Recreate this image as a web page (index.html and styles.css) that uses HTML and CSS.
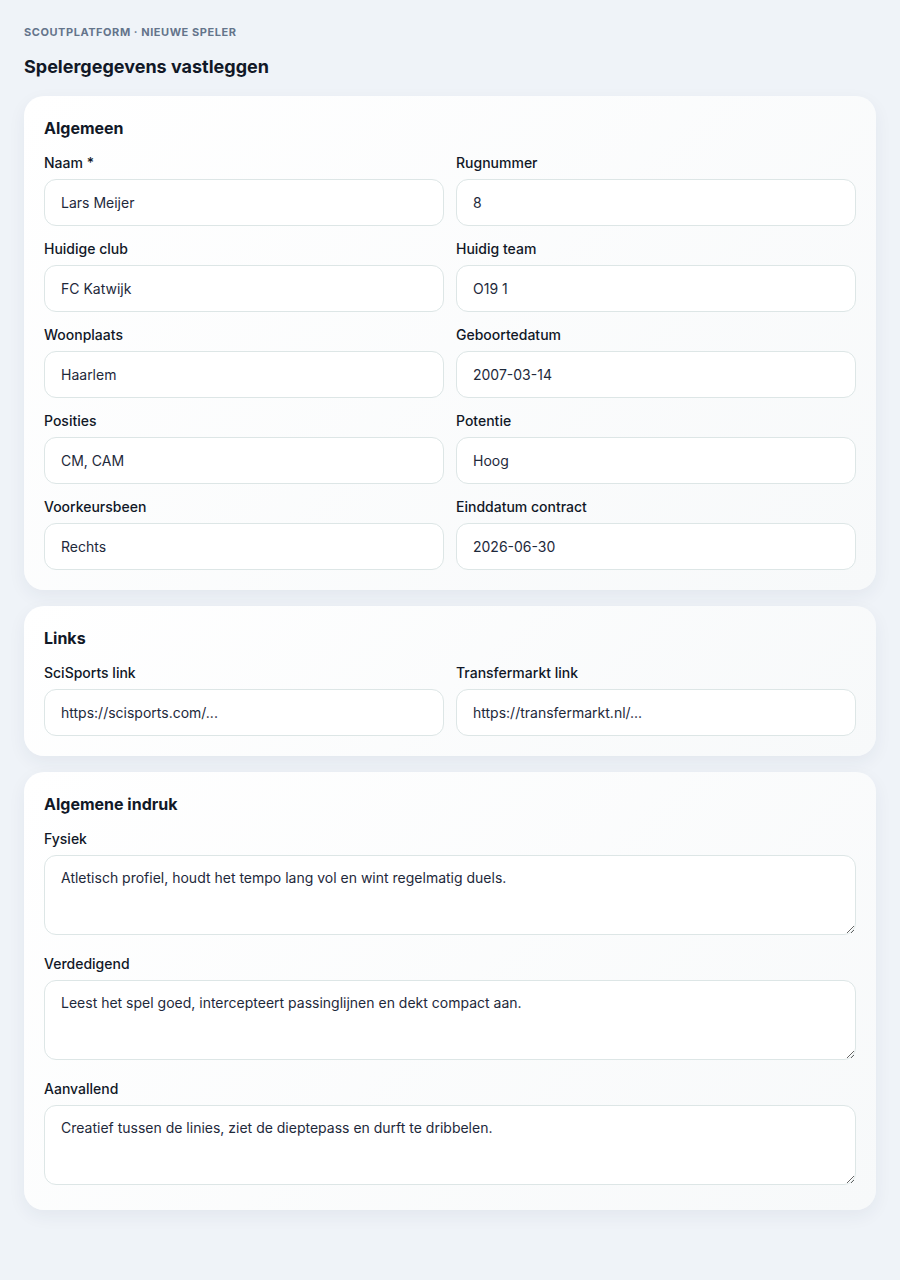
FILE: index.html
```html
<!DOCTYPE html>
<html lang="nl">
<head>
<meta charset="utf-8">
<title>Spelergegevens vastleggen</title>
<link rel="stylesheet" href="styles.css">
</head>
<body>
<div class="page">
  <p class="eyebrow">Scoutplatform · Nieuwe speler</p>
  <h1 class="title">Spelergegevens vastleggen</h1>

  <section class="card">
    <h2 class="card-title">Algemeen</h2>
    <div class="grid">
      <label class="field"><span class="label">Naam *</span><input class="input" value="Lars Meijer"></label>
      <label class="field"><span class="label">Rugnummer</span><input class="input" value="8"></label>
      <label class="field"><span class="label">Huidige club</span><input class="input" value="FC Katwijk"></label>
      <label class="field"><span class="label">Huidig team</span><input class="input" value="O19 1"></label>
      <label class="field"><span class="label">Woonplaats</span><input class="input" value="Haarlem"></label>
      <label class="field"><span class="label">Geboortedatum</span><input class="input" value="2007-03-14"></label>
      <label class="field"><span class="label">Posities</span><input class="input" value="CM, CAM"></label>
      <label class="field"><span class="label">Potentie</span><input class="input" value="Hoog"></label>
      <label class="field"><span class="label">Voorkeursbeen</span><input class="input" value="Rechts"></label>
      <label class="field"><span class="label">Einddatum contract</span><input class="input" value="2026-06-30"></label>
    </div>
  </section>

  <section class="card">
    <h2 class="card-title">Links</h2>
    <div class="grid">
      <label class="field"><span class="label">SciSports link</span><input class="input" value="https://scisports.com/..."></label>
      <label class="field"><span class="label">Transfermarkt link</span><input class="input" value="https://transfermarkt.nl/..."></label>
    </div>
  </section>

  <section class="card">
    <h2 class="card-title">Algemene indruk</h2>
    <div class="stack">
      <label class="field"><span class="label">Fysiek</span><textarea class="textarea">Atletisch profiel, houdt het tempo lang vol en wint regelmatig duels.</textarea></label>
      <label class="field"><span class="label">Verdedigend</span><textarea class="textarea">Leest het spel goed, intercepteert passinglijnen en dekt compact aan.</textarea></label>
      <label class="field"><span class="label">Aanvallend</span><textarea class="textarea">Creatief tussen de linies, ziet de dieptepass en durft te dribbelen.</textarea></label>
    </div>
  </section>
</div>
</body>
</html>
```

FILE: styles.css
```css
* { box-sizing: border-box; }

html, body {
  margin: 0;
  padding: 0;
  background: #eff3f8;
  font-family: Inter, "Liberation Sans", sans-serif;
  color: #0f172a;
}

.page {
  padding: 24px 24px 40px;
  display: flex;
  flex-direction: column;
  gap: 16px;
}

.eyebrow {
  margin: 0;
  font-size: 11px;
  line-height: 16px;
  font-weight: 700;
  letter-spacing: 0.05em;
  text-transform: uppercase;
  color: #64748b;
}

.title {
  margin: -2px 0 0;
  font-size: 18px;
  line-height: 26px;
  font-weight: 700;
  color: #111827;
}

.card {
  background: linear-gradient(135deg, #ffffff 0%, #f7f9fa 100%);
  border-radius: 20px;
  padding: 20px;
  box-shadow: 0 6px 18px rgba(30, 50, 80, 0.06);
}

.card-title {
  margin: 0 0 13px;
  font-size: 16px;
  line-height: 24px;
  font-weight: 700;
  color: #111827;
}

.grid {
  display: grid;
  grid-template-columns: 1fr 1fr;
  column-gap: 12px;
  row-gap: 13px;
}

.stack {
  display: flex;
  flex-direction: column;
  gap: 14px;
}

.field {
  display: flex;
  flex-direction: column;
  gap: 6px;
}

.label {
  font-size: 14px;
  line-height: 20px;
  font-weight: 500;
  color: #111827;
}

.input,
.textarea {
  width: 100%;
  border: 1px solid #dde6e6;
  border-radius: 12px;
  background: #ffffff;
  font-family: Inter, "Liberation Sans", sans-serif;
  font-size: 14px;
  color: #1e293b;
  padding: 0 16px;
  outline: none;
}

.input {
  height: 47px;
}

.textarea {
  height: 80px;
  padding: 12px 16px;
  line-height: 20px;
  resize: vertical;
  margin-bottom: 5px;
}
```
